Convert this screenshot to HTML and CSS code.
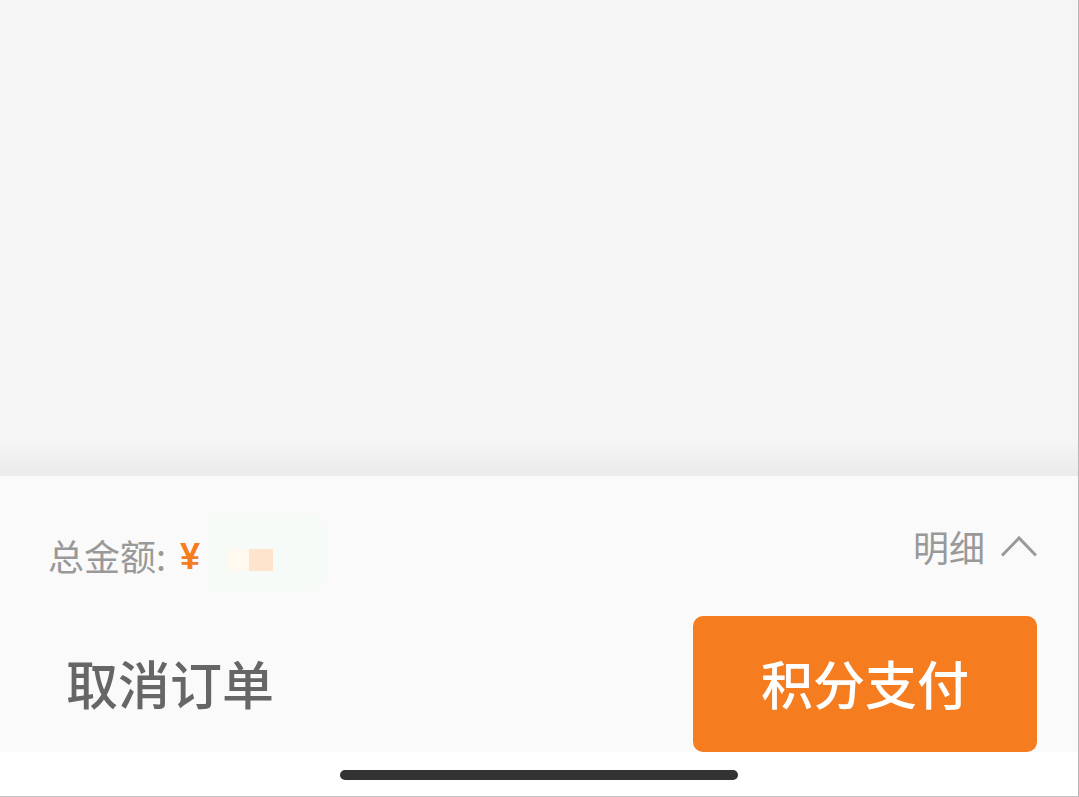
FILE: index.html
```html
<!DOCTYPE html>
<html lang="zh-CN">
<head>
<meta charset="utf-8">
<meta name="viewport" content="width=device-width, initial-scale=1">
<title>订单支付</title>
<link rel="stylesheet" href="styles.css">
</head>
<body>
<div class="screen">
  <main class="content"></main>
  <section class="sheet">
    <div class="summary">
      <p class="total">
        <span class="label">总金额:</span>
        <span class="currency">¥</span>
        <span class="mask"><span class="block block-light"></span><span class="block block-warm"></span></span>
      </p>
      <button class="details" type="button">
        <span>明细</span>
        <svg class="chevron" viewBox="0 0 36 22" aria-hidden="true"><path d="M1 20.500 18 3 35 20.500"/></svg>
      </button>
    </div>
    <div class="actions">
      <button class="cancel" type="button">取消订单</button>
      <button class="pay" type="button">积分支付</button>
    </div>
  </section>
  <footer class="home"><div class="indicator"></div></footer>
</div>
</body>
</html>
```
FILE: styles.css
```css
* {
  box-sizing: border-box;
}

body {
  margin: 0;
  font-family: "Noto Sans CJK SC", sans-serif;
}

button {
  margin: 0;
  padding: 0;
  border: 0;
  background: none;
  font: inherit;
  cursor: pointer;
}

.screen {
  display: flex;
  flex-direction: column;
  min-height: 100vh;
  border-right: 1px solid #b8b8b8;
  border-bottom: 1px solid #c4c4c4;
  background: #f5f5f5;
}

.content {
  flex: 1;
  background: linear-gradient(to top, #ebebeb, #f5f5f5 36px);
}

.sheet {
  padding: 38px 41px 0 48px;
  background: #fafafa;
}

.summary {
  display: flex;
  align-items: flex-start;
  justify-content: space-between;
  color: #999;
  font-size: 36px;
}

.total {
  display: flex;
  align-items: center;
  height: 78px;
  margin: 0;
}

.label {
  width: 132px;
}

.currency {
  width: 28px;
  color: #f57c1f;
  font-family: "Liberation Sans", sans-serif;
  font-weight: 700;
}

.label {
  padding-top: 4px;
}

.currency {
  padding-top: 8px;
}

.mask {
  display: flex;
  align-items: center;
  width: 117px;
  height: 78px;
  padding: 14px 20px 0;
  border-radius: 0 16px 16px 0;
  background: #f7fbf7;
}

.block {
  height: 22px;
}

.block-light {
  width: 21px;
  background: #fff9ef;
}

.block-warm {
  width: 24px;
  background: #fee4cc;
}

.details {
  display: flex;
  align-items: center;
  gap: 16px;
  height: 64px;
  color: #999;
}

.chevron {
  width: 36px;
  height: 22px;
  fill: none;
  stroke: #999;
  stroke-width: 3;
}

.actions {
  display: flex;
  align-items: stretch;
  justify-content: space-between;
  height: 136px;
  margin-top: 24px;
  font-size: 52px;
  font-weight: 500;
}

.cancel,
.pay {
  padding-bottom: 4px;
}

.cancel {
  padding-left: 18px;
  color: #666;
}

.pay {
  width: 344px;
  border-radius: 10px;
  background: #f57c1f;
  color: #fff;
}

.home {
  display: flex;
  justify-content: center;
  padding: 18px 0 16px;
  background: #fff;
}

.indicator {
  width: 37%;
  height: 10px;
  border-radius: 5px;
  background: #333;
}
```
